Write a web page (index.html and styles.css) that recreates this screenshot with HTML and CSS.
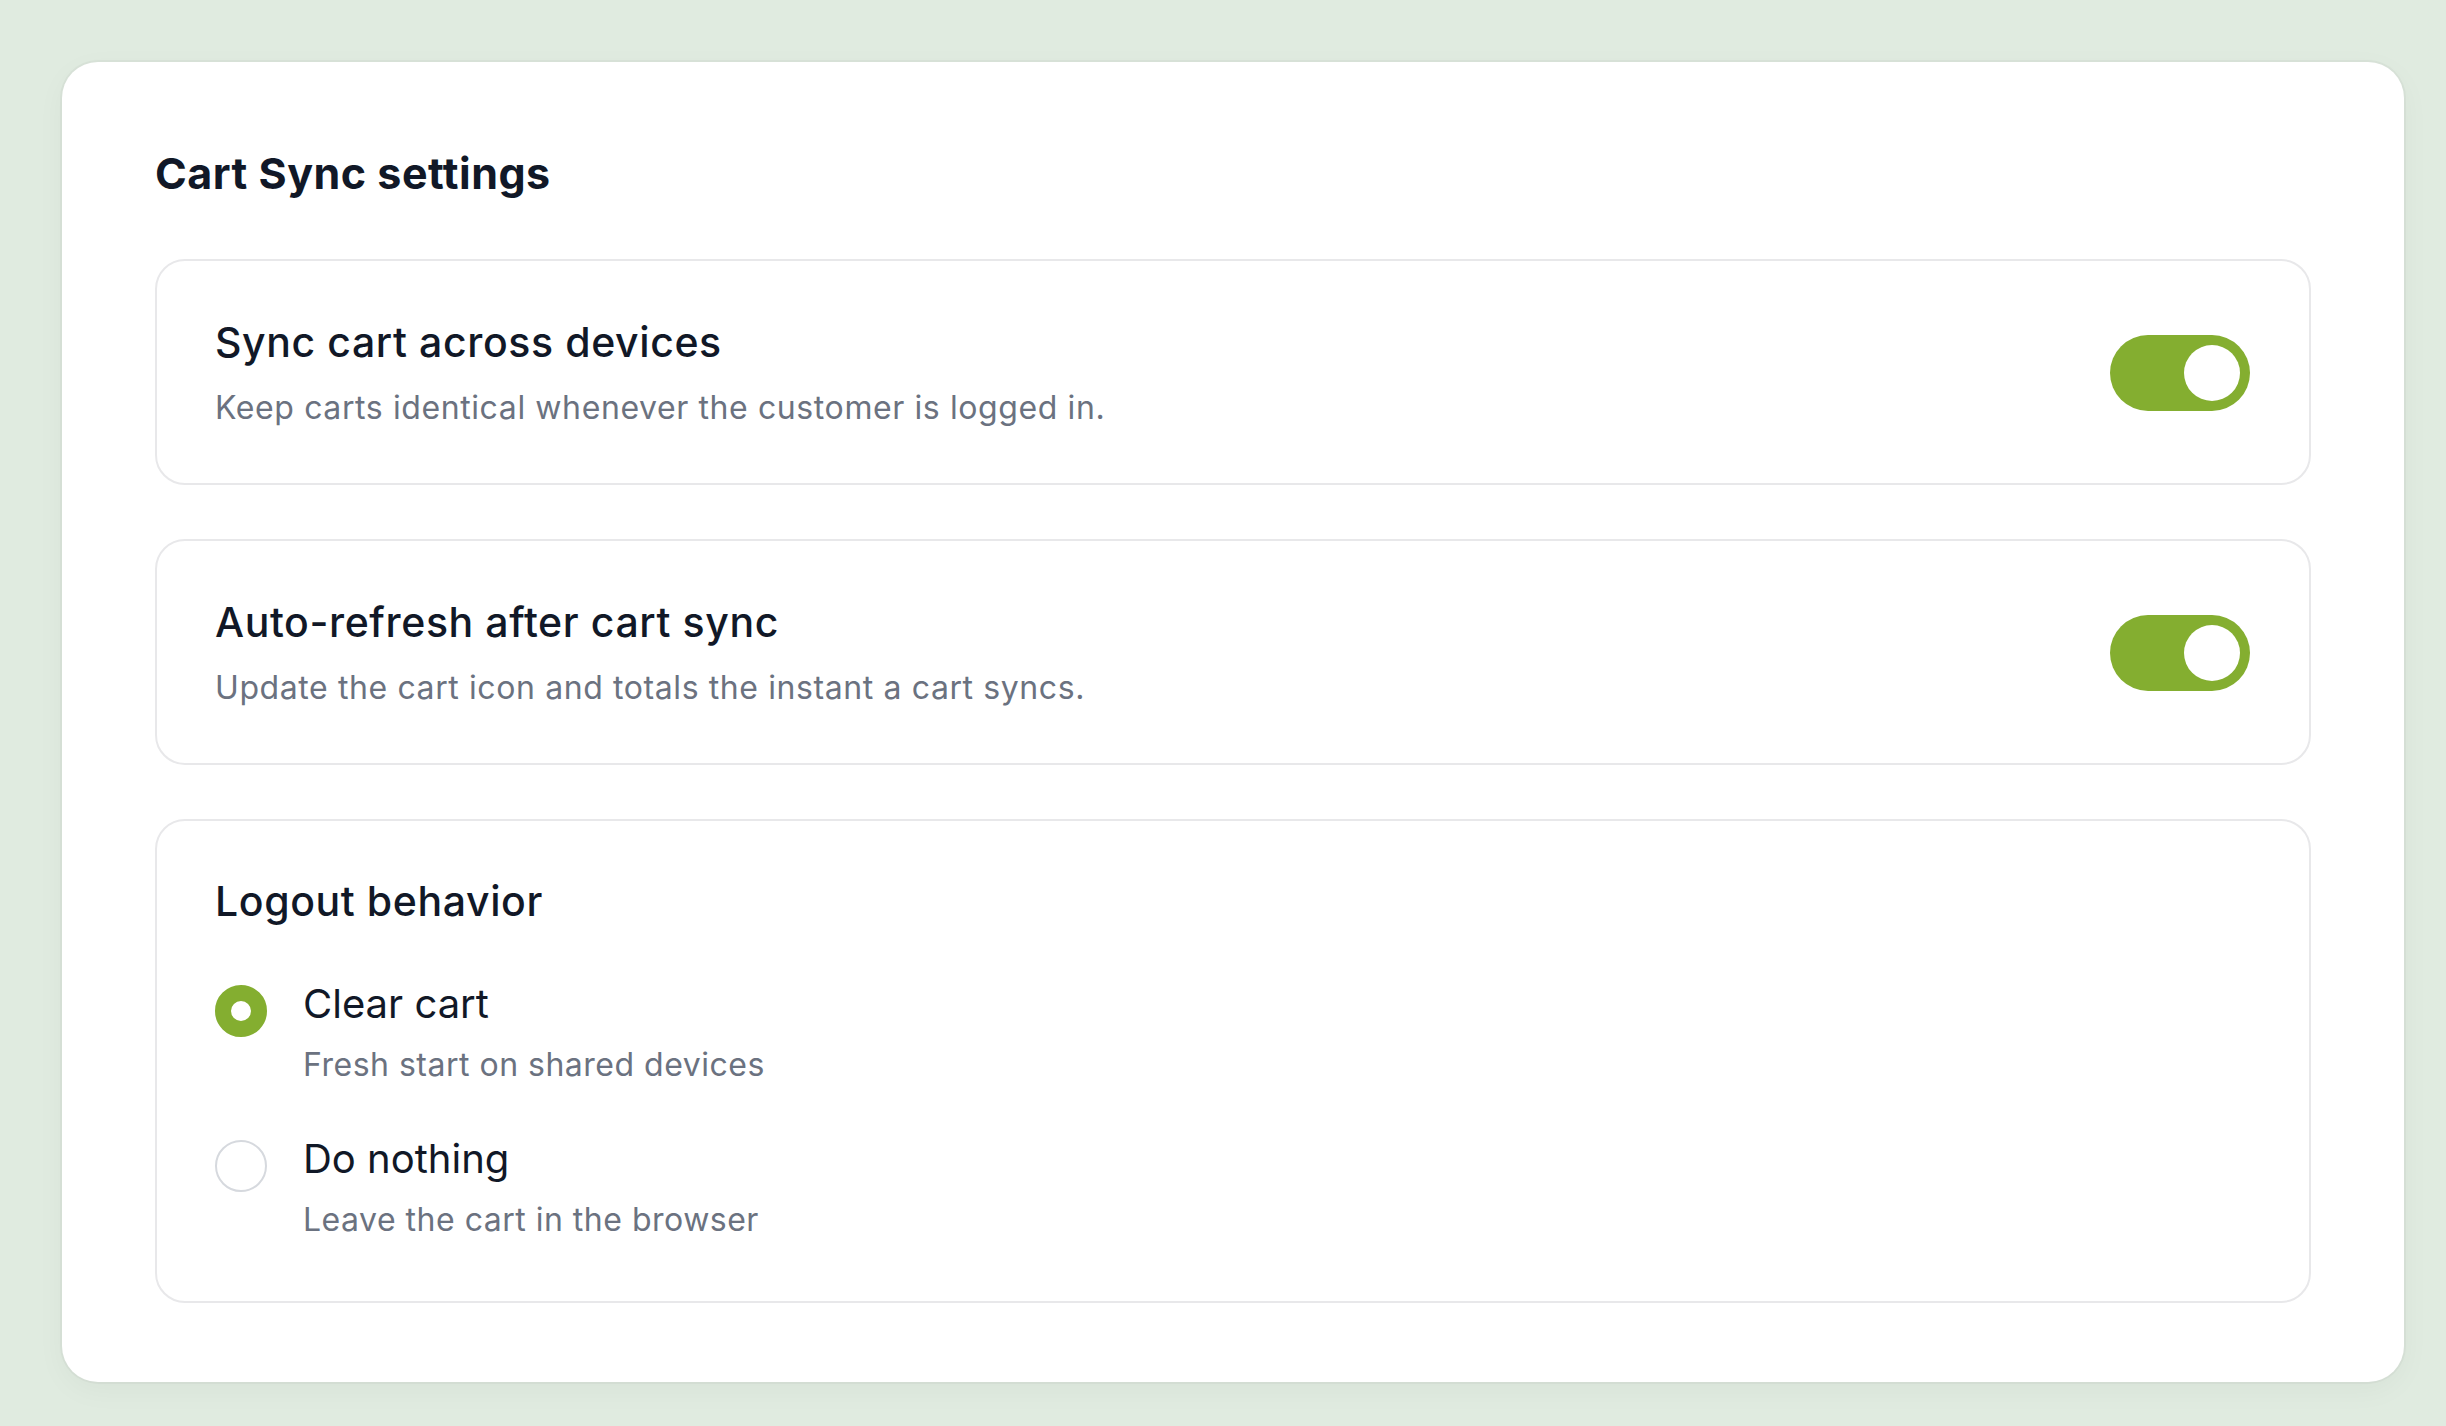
FILE: index.html
```html
<!DOCTYPE html>
<html lang="en">
<head>
    <meta charset="UTF-8">
    <meta name="viewport" content="width=device-width, initial-scale=1.0">
    <title>Cart Sync settings</title>

    <link rel="stylesheet" href="styles.css">

</head>
<body>

    <div class="panel">
        <h1 class="panel-title">Cart Sync settings</h1>

        <div class="setting">
            <div class="setting-text">
                <div class="setting-name">Sync cart across devices</div>
                <div class="setting-hint">Keep carts identical whenever the customer is logged in.</div>
            </div>
            <button class="toggle on" onclick="flip(this)"><span class="knob"></span></button>
        </div>

        <div class="setting">
            <div class="setting-text">
                <div class="setting-name">Auto-refresh after cart sync</div>
                <div class="setting-hint">Update the cart icon and totals the instant a cart syncs.</div>
            </div>
            <button class="toggle on" onclick="flip(this)"><span class="knob"></span></button>
        </div>

        <div class="setting setting-group">
            <div class="setting-name">Logout behavior</div>

            <div class="options">
                <label class="option">
                    <input type="radio" name="logout" value="clear" checked>
                    <span class="radio"></span>
                    <span class="option-text">
                        <span class="option-name">Clear cart</span>
                        <span class="setting-hint">Fresh start on shared devices</span>
                    </span>
                </label>

                <label class="option">
                    <input type="radio" name="logout" value="nothing">
                    <span class="radio"></span>
                    <span class="option-text">
                        <span class="option-name">Do nothing</span>
                        <span class="setting-hint">Leave the cart in the browser</span>
                    </span>
                </label>
            </div>
        </div>
    </div>

    <script>
        function flip(btn) {
            btn.classList.toggle('on');
        }
    </script>

</body>
</html>
```

FILE: styles.css
```css
/* General Styling */
body {
    margin: 0;
    padding: 62px 0 46px 62px;
    background: #e0ebe0;
    font-family: Inter, "Noto Sans", sans-serif;
    color: #111827;
}

.panel {
    box-sizing: border-box;
    width: 2342px;
    background: #fff;
    border-radius: 36px;
    padding: 85px 93px 79px;
    box-shadow: 0 0 0 2px rgba(0, 0, 0, 0.03), 0 8px 30px rgba(0, 0, 0, 0.04);
}

.panel-title {
    margin: 0 0 60px;
    font-size: 43px;
    line-height: 52px;
    font-weight: 700;
    letter-spacing: 0.5px;
}

/* Setting cards */
.setting {
    display: flex;
    align-items: center;
    justify-content: space-between;
    border: 2px solid #e8e8ea;
    border-radius: 30px;
    padding: 56px 59px 54px 58px;
    margin-bottom: 54px;
}

.setting:last-child {
    margin-bottom: 0;
}

.setting-group {
    display: block;
    padding-top: 55px;
    padding-bottom: 60px;
}

.setting-name {
    font-size: 41px;
    line-height: 50px;
    font-weight: 500;
    letter-spacing: 0.6px;
}

.setting-hint {
    display: block;
    margin-top: 20px;
    font-size: 32px;
    line-height: 42px;
    color: #6b7280;
    letter-spacing: 0.6px;
}

/* Toggle switch */
.toggle {
    position: relative;
    width: 140px;
    height: 76px;
    border: none;
    border-radius: 38px;
    background: #d1d5db;
    padding: 0;
    cursor: pointer;
    transition: background 0.3s;
}

.toggle.on {
    background: #84ae30;
}

.knob {
    position: absolute;
    top: 10px;
    left: 10px;
    width: 56px;
    height: 56px;
    border-radius: 50%;
    background: #fff;
    transition: left 0.3s;
}

.toggle.on .knob {
    left: 74px;
}

/* Radio options */
.options {
    margin-top: 53px;
    display: flex;
    flex-direction: column;
    gap: 48px;
}

.option {
    display: flex;
    align-items: flex-start;
    gap: 36px;
    cursor: pointer;
}

.option input {
    display: none;
}

.radio {
    box-sizing: border-box;
    flex: none;
    width: 52px;
    height: 52px;
    margin-top: 6px;
    border-radius: 50%;
    border: 2px solid #d6d9de;
    background: #fff;
}

.option input:checked + .radio {
    border: 16px solid #84ae30;
}

.option-text {
    display: flex;
    flex-direction: column;
}

.option-name {
    font-size: 40px;
    line-height: 50px;
}

.option .setting-hint {
    margin-top: 15px;
    letter-spacing: 0.5px;
}
```
